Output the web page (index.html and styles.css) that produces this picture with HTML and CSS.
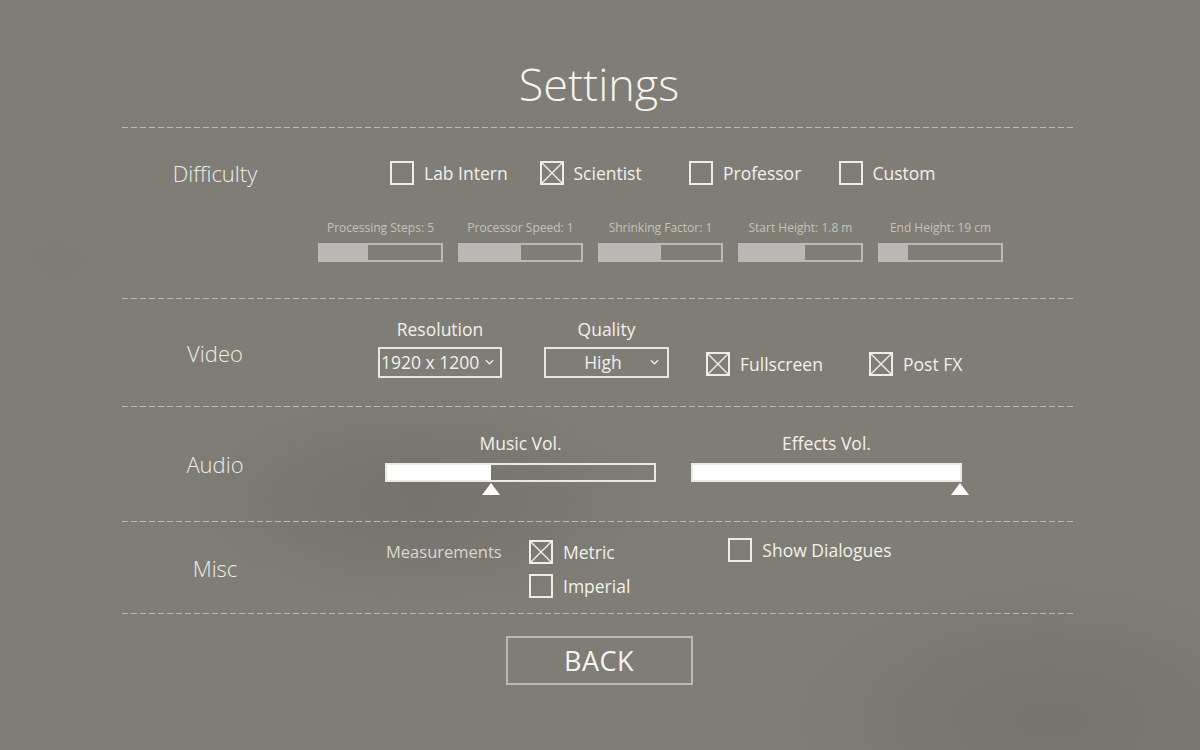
FILE: index.html
```html
<!DOCTYPE html>
<html>
<head>
<meta charset="utf-8">
<link rel="stylesheet" href="styles.css">
</head>
<body>
<div class="page">
  <header class="header"><h1 class="title">Settings</h1></header>
  <div class="sep"></div>

  <section class="section difficulty">
    <div class="label top">Difficulty</div>
    <div class="content">
      <div class="check-row">
        <div class="check"><span class="box"></span><span class="ctext">Lab Intern</span></div>
        <div class="check"><span class="box"><svg viewBox="0 0 24 24"><path d="M2 2L22 22M22 2L2 22"/></svg></span><span class="ctext">Scientist</span></div>
        <div class="check"><span class="box"></span><span class="ctext">Professor</span></div>
        <div class="check"><span class="box"></span><span class="ctext">Custom</span></div>
      </div>
      <div class="mini-row">
        <div class="mini"><div class="mini-label">Processing Steps: 5</div><div class="mini-bar"><div class="mini-fill" style="width:40%"></div></div></div>
        <div class="mini"><div class="mini-label">Processor Speed: 1</div><div class="mini-bar"><div class="mini-fill" style="width:50%"></div></div></div>
        <div class="mini"><div class="mini-label">Shrinking Factor: 1</div><div class="mini-bar"><div class="mini-fill" style="width:50%"></div></div></div>
        <div class="mini"><div class="mini-label">Start Height: 1.8 m</div><div class="mini-bar"><div class="mini-fill" style="width:54%"></div></div></div>
        <div class="mini"><div class="mini-label">End Height: 19 cm</div><div class="mini-bar"><div class="mini-fill" style="width:23%"></div></div></div>
      </div>
    </div>
  </section>
  <div class="sep"></div>

  <section class="section video">
    <div class="label">Video</div>
    <div class="content video-content">
      <div class="field res">
        <div class="field-label">Resolution</div>
        <div class="select"><span class="sel-text">1920 x 1200</span><svg class="chev" viewBox="0 0 10 6"><path d="M1 1L5 5L9 1"/></svg></div>
      </div>
      <div class="field qual">
        <div class="field-label">Quality</div>
        <div class="select"><span class="sel-text">High</span><svg class="chev" viewBox="0 0 10 6"><path d="M1 1L5 5L9 1"/></svg></div>
      </div>
      <div class="check fs"><span class="box"><svg viewBox="0 0 24 24"><path d="M2 2L22 22M22 2L2 22"/></svg></span><span class="ctext">Fullscreen</span></div>
      <div class="check"><span class="box"><svg viewBox="0 0 24 24"><path d="M2 2L22 22M22 2L2 22"/></svg></span><span class="ctext">Post FX</span></div>
    </div>
  </section>
  <div class="sep"></div>

  <section class="section audio">
    <div class="label">Audio</div>
    <div class="content audio-content">
      <div class="vol music">
        <div class="field-label">Music Vol.</div>
        <div class="vol-bar"><div class="vol-fill" style="width:39%"></div><span class="thumb" style="left:39%"></span></div>
      </div>
      <div class="vol effects">
        <div class="field-label">Effects Vol.</div>
        <div class="vol-bar"><div class="vol-fill" style="width:100%"></div><span class="thumb" style="left:100%"></span></div>
      </div>
    </div>
  </section>
  <div class="sep"></div>

  <section class="section misc">
    <div class="label">Misc</div>
    <div class="content misc-content">
      <div class="meas">Measurements</div>
      <div class="meas-opts">
        <div class="check"><span class="box"><svg viewBox="0 0 24 24"><path d="M2 2L22 22M22 2L2 22"/></svg></span><span class="ctext">Metric</span></div>
        <div class="check"><span class="box"></span><span class="ctext">Imperial</span></div>
      </div>
      <div class="check dialog"><span class="box"></span><span class="ctext">Show Dialogues</span></div>
    </div>
  </section>
  <div class="sep"></div>

  <div class="back-wrap"><button class="back">BACK</button></div>
</div>
</body>
</html>
```

FILE: styles.css
```css
html, body {
  margin: 0;
  padding: 0;
}
body {
  width: 1200px;
  height: 750px;
  overflow: hidden;
  font-family: "Open Sans", "Noto Sans", sans-serif;
  color: #f2f0ec;
  background-color: #807d76;
  background-image:
    radial-gradient(ellipse 260px 110px at 420px 500px, rgba(90, 86, 80, 0.3), rgba(90, 86, 80, 0) 100%),
    radial-gradient(ellipse 300px 160px at 1050px 720px, rgba(95, 92, 86, 0.3), rgba(95, 92, 86, 0) 100%),
    radial-gradient(ellipse 200px 140px at 60px 260px, rgba(120, 117, 110, 0.25), rgba(120, 117, 110, 0) 100%);
}
.page {
  width: 954px;
  margin-left: 122px;
}
.header {
  height: 127px;
  box-sizing: border-box;
  padding-top: 40px;
  display: flex;
  justify-content: center;
  align-items: center;
}
.title {
  margin: 0;
  font-size: 45px;
  font-weight: 300;
  line-height: 60px;
  color: #f6f4f0;
}
.sep {
  height: 1px;
  background: repeating-linear-gradient(to right, #bdbab3 0 6px, transparent 6px 9px);
}
.section {
  display: flex;
  align-items: center;
}
.label {
  width: 186px;
  text-align: center;
  font-size: 22px;
  font-weight: 300;
  line-height: 24px;
  color: #eeece8;
  flex: none;
}
.label.top {
  align-self: flex-start;
  padding-top: 33px;
}
.content {
  flex: 1;
}

/* checkbox */
.check {
  display: flex;
  align-items: center;
  gap: 10px;
}
.box {
  width: 24px;
  height: 24px;
  box-sizing: border-box;
  border: 2px solid #efedea;
  flex: none;
  position: relative;
}
.box svg {
  position: absolute;
  left: -2px;
  top: -2px;
  width: 24px;
  height: 24px;
  fill: none;
  stroke: #efedea;
  stroke-width: 1.4;
}
.ctext {
  font-size: 17.5px;
  line-height: 24px;
  color: #f2f0ec;
}

/* difficulty */
.difficulty {
  height: 170px;
  align-items: flex-start;
}
.difficulty .content {
  padding-top: 33px;
}
.check-row {
  display: flex;
  padding-left: 82px;
}
.check-row .check {
  width: 149.5px;
}
.mini-row {
  display: flex;
  gap: 15px;
  padding-left: 10px;
  margin-top: 35px;
}
.mini {
  width: 125px;
  display: flex;
  flex-direction: column;
  align-items: center;
}
.mini-label {
  font-size: 12px;
  line-height: 16px;
  color: #c5c2bc;
  white-space: nowrap;
  margin-bottom: 7px;
}
.mini-bar {
  width: 125px;
  height: 19px;
  box-sizing: border-box;
  border: 2px solid #bcb9b4;
  display: flex;
}
.mini-fill {
  height: 100%;
  background: #b9b8b5;
}

/* video */
.video {
  height: 107px;
}
.video-content {
  display: flex;
  align-items: flex-end;
  padding-left: 70px;
  padding-bottom: 10px;
}
.field {
  display: flex;
  flex-direction: column;
  align-items: center;
}
.field-label {
  font-size: 17.5px;
  line-height: 22px;
  color: #f2f0ec;
  margin-bottom: 7px;
}
.select {
  width: 124px;
  height: 31px;
  box-sizing: border-box;
  border: 2px solid #e9e7e3;
  display: flex;
  align-items: center;
  padding: 0 8px 0 1px;
}
.sel-text {
  flex: 1;
  text-align: center;
  font-size: 17.5px;
  line-height: 24px;
  white-space: nowrap;
}
.chev {
  width: 9px;
  height: 6px;
  fill: none;
  stroke: #f0eeea;
  stroke-width: 1.4;
  flex: none;
}
.res .sel-text {
  text-align: left;
}
.res .select {
  padding-right: 6px;
}
.qual {
  margin-left: 42px;
}
.qual .select {
  width: 125px;
  padding-left: 10px;
}
.video-content .check {
  margin-bottom: 2px;
}
.video-content .fs {
  margin-left: 37px;
  width: 163px;
}

/* audio */
.audio {
  height: 114px;
}
.audio-content {
  display: flex;
  padding-left: 77px;
  gap: 35px;
  padding-bottom: 2px;
}
.vol {
  display: flex;
  flex-direction: column;
  align-items: center;
}
.vol .field-label {
  margin-bottom: 9px;
}
.vol-bar {
  width: 271px;
  height: 19px;
  box-sizing: border-box;
  border: 2px solid #ebe9e5;
  position: relative;
  display: flex;
  margin-bottom: 13px;
}
.vol-fill {
  height: 100%;
  background: #ffffff;
}
.thumb {
  position: absolute;
  top: 18px;
  margin-left: -9px;
  width: 0;
  height: 0;
  border-left: 9px solid transparent;
  border-right: 9px solid transparent;
  border-bottom: 12px solid #ffffff;
}

/* misc */
.misc {
  height: 91px;
}
.misc-content {
  display: flex;
  align-items: flex-start;
  padding-left: 78px;
  padding-top: 3px;
}
.meas {
  width: 143px;
  font-size: 16.5px;
  line-height: 24px;
  color: #d9d6d0;
}
.meas-opts {
  display: flex;
  flex-direction: column;
  gap: 10px;
}
.dialog {
  margin-left: 98px;
  margin-top: -2px;
}

/* back */
.back-wrap {
  display: flex;
  justify-content: center;
  padding-top: 22px;
}
.back {
  width: 187px;
  height: 49px;
  box-sizing: border-box;
  border: 2px solid #bcb9b3;
  background: transparent;
  color: #f6f4f0;
  font-family: "Open Sans", "Noto Sans", sans-serif;
  font-size: 27px;
  line-height: 44px;
  padding: 0;
  letter-spacing: 0.5px;
}
```
